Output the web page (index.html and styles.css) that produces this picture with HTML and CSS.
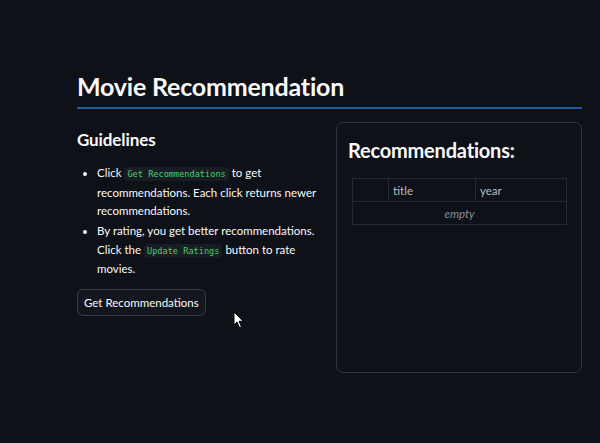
FILE: index.html
```html
<!DOCTYPE html>
<html lang="en">
<head>
    <meta charset="UTF-8">
    <meta name="viewport" content="width=device-width, initial-scale=1.0">
    <title>Movie Recommendation</title>
    <link rel="stylesheet" href="styles.css">
</head>
<body>
    <div class="main">
        <h1 class="title">Movie Recommendation</h1>
        <div class="columns">
            <div class="col">
                <h3>Guidelines</h3>
                <ul class="guide">
                    <li>Click <code>Get Recommendations</code> to get recommendations. Each click returns newer recommendations.</li>
                    <li>By rating, you get better recommendations. Click the <code>Update Ratings</code> button to rate movies.</li>
                </ul>
                <button class="btn" type="button">Get Recommendations</button>
            </div>
            <div class="col">
                <div class="box">
                    <h2>Recommendations:</h2>
                    <table class="frame">
                        <thead>
                            <tr><th class="idx"></th><th class="c-title">title</th><th>year</th></tr>
                        </thead>
                        <tbody>
                            <tr><td colspan="3" class="empty">empty</td></tr>
                        </tbody>
                    </table>
                </div>
            </div>
        </div>
    </div>
    <svg class="cursor" width="12" height="18" viewBox="0 0 12 18">
        <path d="M1 1 L1 14 L4 11 L6.5 16.5 L8.5 15.6 L6 10.3 L10.2 10.3 Z" fill="#fff" stroke="#000" stroke-width="1"/>
    </svg>
</body>
</html>
```

FILE: styles.css
```css
body {
    margin: 0;
    background-color: #0e1117;
    color: #fafafa;
    font-family: "Lato", "Noto Sans", sans-serif;
    position: relative;
    height: 443px;
    overflow: hidden;
}
.main {
    width: 505px;
    margin-left: 77px;
    padding-top: 68px;
}
.title {
    font-size: 25px;
    font-weight: 700;
    letter-spacing: -0.2px;
    margin: 0;
    line-height: 36px;
    padding-bottom: 3px;
    border-bottom: 2px solid #1c5fa0;
}
.columns {
    display: flex;
    gap: 13px;
    margin-top: 13px;
}
.col {
    flex: 1;
    min-width: 0;
}
h3 {
    font-size: 17px;
    font-weight: 700;
    letter-spacing: -0.1px;
    margin: 6px 0 12px;
    line-height: 24px;
}
.guide {
    margin: 0;
    padding-left: 20px;
    font-size: 11.5px;
    line-height: 18.5px;
}
.guide li {
    margin-bottom: 1.5px;
}
code {
    font-family: "DejaVu Sans Mono", monospace;
    font-size: 8.6px;
    color: #3dd56d;
    background-color: #1a1c24;
    padding: 2px 3px;
    border-radius: 4px;
}
.btn {
    margin-top: 9px;
    font-family: inherit;
    font-size: 11.5px;
    color: #fafafa;
    background-color: #13161d;
    border: 1px solid #3a3d46;
    border-radius: 6px;
    padding: 0 6px;
    height: 27px;
}
.box {
    height: 251px;
    border: 1px solid #30333c;
    border-radius: 7px;
    padding: 0 14px 0 11px;
    box-sizing: border-box;
}
h2 {
    font-size: 20px;
    font-weight: 700;
    letter-spacing: -0.2px;
    margin: 14px 0 15px;
    line-height: 26px;
}
.frame {
    width: 215px;
    margin-left: 4px;
    border-collapse: collapse;
    font-size: 11.5px;
}
.frame th, .frame td {
    border: 1px solid #262932;
    height: 22px;
    padding: 0 4px;
}
.frame th {
    text-align: left;
    font-weight: 400;
    color: #b9bcc4;
}
.frame .idx {
    width: 27px;
}
.frame .c-title {
    width: 78px;
}
.empty {
    text-align: center;
    font-style: italic;
    color: #8b8f9c;
}
.cursor {
    position: absolute;
    left: 233px;
    top: 311px;
}
```
